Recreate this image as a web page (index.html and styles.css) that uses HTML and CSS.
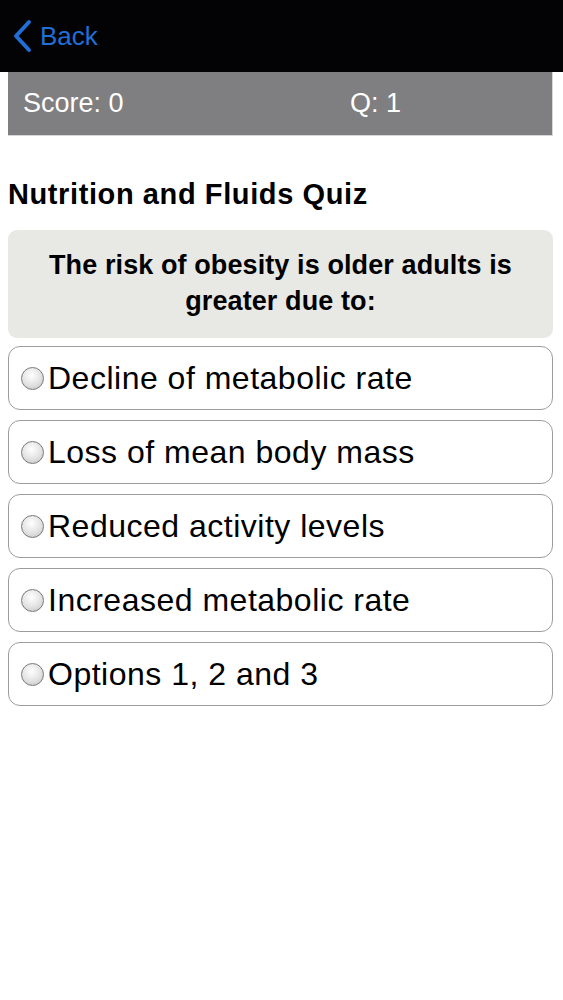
FILE: index.html
```html
<!DOCTYPE html>
<html>
<head>
<meta charset="utf-8">
<link rel="stylesheet" href="styles.css">
</head>
<body>
<header class="navbar">
  <a class="back">
    <svg class="chev" width="20" height="34" viewBox="0 0 20 34"><path d="M17 3 L4 17 L17 31" fill="none" stroke="#1f6fd6" stroke-width="4" stroke-linecap="round" stroke-linejoin="round"/></svg>
    <span>Back</span>
  </a>
</header>
<main class="content">
  <div class="scorebar">
    <span class="score">Score: 0</span>
    <span class="qnum">Q: 1</span>
  </div>
  <h1 class="title">Nutrition and Fluids Quiz</h1>
  <div class="question">The risk of obesity is older adults is greater due to:</div>
  <ul class="options">
    <li class="option"><span class="radio"></span><span class="label">Decline of metabolic rate</span></li>
    <li class="option"><span class="radio"></span><span class="label">Loss of mean body mass</span></li>
    <li class="option"><span class="radio"></span><span class="label">Reduced activity levels</span></li>
    <li class="option"><span class="radio"></span><span class="label">Increased metabolic rate</span></li>
    <li class="option"><span class="radio"></span><span class="label">Options 1, 2 and 3</span></li>
  </ul>
</main>
</body>
</html>
```
FILE: styles.css
```css
html, body {
  margin: 0;
  padding: 0;
  background: #ffffff;
  font-family: "Liberation Sans", Arial, sans-serif;
}
.navbar {
  height: 72px;
  background: #030305;
  display: flex;
  align-items: center;
  padding-left: 12px;
  box-sizing: border-box;
}
.back {
  display: flex;
  align-items: center;
  gap: 8px;
  color: #1f6fd6;
  font-size: 26px;
}
.chev { display: block; }
.content {
  padding: 0 10px 0 8px;
}
.scorebar {
  height: 64px;
  background: #7f7e80;
  border-right: 1px solid #d6d6d6;
  border-bottom: 1px solid #d6d6d6;
  display: flex;
  align-items: center;
  color: #ffffff;
  font-size: 27px;
  padding-left: 15px;
  box-sizing: border-box;
}
.score { width: 327px; }
.title {
  margin: 40px 0 0 0;
  font-size: 29px;
  font-weight: bold;
  line-height: 36px;
  letter-spacing: 0.6px;
  color: #000;
}
.question {
  margin-top: 18px;
  background: #e8e8e4;
  border-radius: 9px;
  min-height: 108px;
  box-sizing: border-box;
  padding: 17px 20px;
  text-align: center;
  font-weight: bold;
  font-size: 27px;
  line-height: 36px;
  letter-spacing: 0.1px;
  color: #000;
}
.options {
  list-style: none;
  margin: 8px 0 0 0;
  padding: 0;
  display: flex;
  flex-direction: column;
  gap: 10px;
}
.option {
  height: 64px;
  border: 1.5px solid #9c9c9c;
  border-radius: 12px;
  box-sizing: border-box;
  display: flex;
  align-items: center;
  padding-left: 12px;
}
.radio {
  width: 23px;
  height: 23px;
  border-radius: 50%;
  border: 1.5px solid #7a7a7a;
  box-sizing: border-box;
  background: radial-gradient(circle at 45% 35%, #ffffff 0%, #e2e2e2 55%, #bdbdbd 100%);
  flex: none;
}
.label {
  margin-left: 4px;
  font-size: 32px;
  color: #000;
  letter-spacing: 0.5px;
}
```
